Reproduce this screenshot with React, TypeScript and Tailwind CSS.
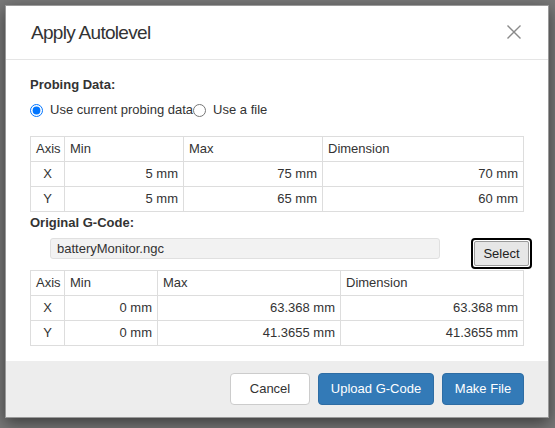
import React from "react";

type Row = { axis: string; min: string; max: string; dim: string };

const probeRows: Row[] = [
  { axis: "X", min: "5 mm", max: "75 mm", dim: "70 mm" },
  { axis: "Y", min: "5 mm", max: "65 mm", dim: "60 mm" },
];

const gcodeRows: Row[] = [
  { axis: "X", min: "0 mm", max: "63.368 mm", dim: "63.368 mm" },
  { axis: "Y", min: "0 mm", max: "41.3655 mm", dim: "41.3655 mm" },
];

function BoundsTable({ rows, widths }: { rows: Row[]; widths: string[] }) {
  const cell = "border border-[#dddddd] h-[25px] px-[5px] py-0 leading-[18px]";
  return (
    <table className="w-[493px] table-fixed border-collapse text-[13px]">
      <colgroup>
        {widths.map((w, i) => (
          <col key={i} style={{ width: w }} />
        ))}
      </colgroup>
      <thead>
        <tr>
          <th className={`${cell} text-left font-normal`}>Axis</th>
          <th className={`${cell} text-left font-normal`}>Min</th>
          <th className={`${cell} text-left font-normal`}>Max</th>
          <th className={`${cell} text-left font-normal`}>Dimension</th>
        </tr>
      </thead>
      <tbody>
        {rows.map((r) => (
          <tr key={r.axis}>
            <td className={`${cell} text-center`}>{r.axis}</td>
            <td className={`${cell} text-right`}>{r.min}</td>
            <td className={`${cell} text-right`}>{r.max}</td>
            <td className={`${cell} text-right`}>{r.dim}</td>
          </tr>
        ))}
      </tbody>
    </table>
  );
}

export default function App() {
  return (
    <main
      className="w-[555px] h-[428px] overflow-hidden bg-[#787878] pt-[5px] pl-[5px] text-[#333333]"
      style={{ fontFamily: '"Liberation Sans", Arial, sans-serif' }}
    >
      <div className="w-[544px] h-[413px] flex flex-col bg-white border border-[#9a9a9a] shadow-[0_5px_15px_rgba(0,0,0,0.5)]">
        {/* header */}
        <div className="h-[54px] flex items-center justify-between border-b border-[#e5e5e5] pl-[25px] pr-[25px]">
          <h4 className="text-[19px] leading-[24px] tracking-[-0.7px] mt-[1px]">Apply Autolevel</h4>
          <svg width="16" height="16" viewBox="0 0 16 16" className="mr-[1px] mt-[-2px]">
            <path d="M1.5 1.5 L14.5 14.5 M14.5 1.5 L1.5 14.5" stroke="#8a8a8a" strokeWidth="1.4" />
          </svg>
        </div>

        {/* body */}
        <div className="flex-1 px-[24px] pt-[16px] text-[13px]">
          <div className="font-bold leading-[18px]">Probing Data:</div>
          <div className="flex items-center mt-[7px] h-[18px]">
            <label className="flex items-center">
              <input type="radio" name="src" defaultChecked className="m-0 w-[13px] h-[13px] mr-[7px]" />
              Use current probing data
            </label>
            <label className="flex items-center">
              <input type="radio" name="src" className="m-0 w-[13px] h-[13px] mr-[7px]" />
              Use a file
            </label>
          </div>

          <div className="mt-[17px]">
            <BoundsTable rows={probeRows} widths={["34px", "119px", "139px", "201px"]} />
          </div>

          <div className="font-bold leading-[19px] mt-[1px]">Original G-Code:</div>

          <div className="flex items-start mt-[6px] h-[32px]">
            <div className="ml-[20px] w-[390px] h-[21px] shrink-0 bg-[#f2f2f2] border border-[#e0e0e0] rounded-[3px] px-[6px] leading-[19px]">
              batteryMonitor.ngc
            </div>
            <button className="ml-[31px] w-[61px] h-[31px] shrink-0 rounded-[4px] border-2 border-black p-[1px]">
              <span className="flex items-center justify-center w-full h-full rounded-[2px] border border-[#9a9a9a] bg-[#e6e6e6] text-[13px] text-[#222]">
                Select
              </span>
            </button>
          </div>

          <BoundsTable rows={gcodeRows} widths={["34px", "93px", "183px", "183px"]} />
        </div>

        {/* footer */}
        <div className="h-[56px] bg-[#ededed] flex items-start justify-end gap-[8px] pt-[12px] pr-[24px] text-[13px]">
          <button className="w-[80px] h-[32px] rounded-[4px] border border-[#cccccc] bg-white text-[#333]">Cancel</button>
          <button className="w-[116px] h-[32px] rounded-[4px] border border-[#2e6da4] bg-[#337ab7] text-white">
            Upload G-Code
          </button>
          <button className="w-[82px] h-[32px] rounded-[4px] border border-[#2e6da4] bg-[#337ab7] text-white">
            Make File
          </button>
        </div>
      </div>
    </main>
  );
}
